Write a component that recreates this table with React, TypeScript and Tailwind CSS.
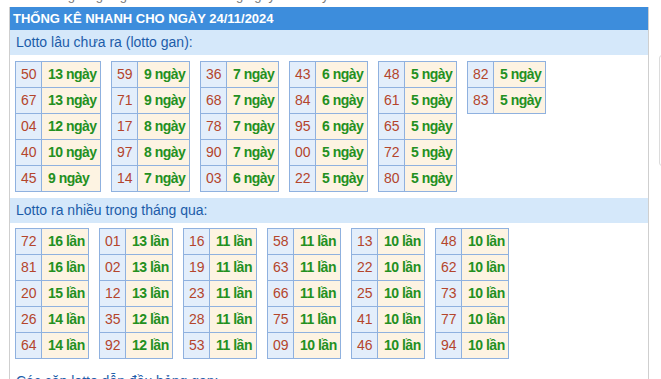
const ganCols: [string, string][][] = [
  [["50", "13"], ["67", "13"], ["04", "12"], ["40", "10"], ["45", "9"]],
  [["59", "9"], ["71", "9"], ["17", "8"], ["97", "8"], ["14", "7"]],
  [["36", "7"], ["68", "7"], ["78", "7"], ["90", "7"], ["03", "6"]],
  [["43", "6"], ["84", "6"], ["95", "6"], ["00", "5"], ["22", "5"]],
  [["48", "5"], ["61", "5"], ["65", "5"], ["72", "5"], ["80", "5"]],
  [["82", "5"], ["83", "5"]],
];

const nhieuCols: [string, string][][] = [
  [["72", "16"], ["81", "16"], ["20", "15"], ["26", "14"], ["64", "14"]],
  [["01", "13"], ["02", "13"], ["12", "13"], ["35", "12"], ["92", "12"]],
  [["16", "11"], ["19", "11"], ["23", "11"], ["28", "11"], ["53", "11"]],
  [["58", "11"], ["63", "11"], ["66", "11"], ["75", "11"], ["09", "10"]],
  [["13", "10"], ["22", "10"], ["25", "10"], ["41", "10"], ["46", "10"]],
  [["48", "10"], ["62", "10"], ["73", "10"], ["77", "10"], ["94", "10"]],
];

function LottoTable({ rows, unit, wide }: { rows: [string, string][]; unit: string; wide: string }) {
  return (
    <table className={`table-fixed border-collapse border border-[#8fb1df] ${wide}`}>
      <tbody>
        {rows.map(([num, count]) => (
          <tr key={num} className="h-[26px]">
            <td className="w-[26px] border border-[#8fb1df] bg-[#e3eefb] pl-[5px] text-[14px] text-[#b4452c]">{num}</td>
            <td className="border border-[#8fb1df] bg-[#fdf3e2] pl-[6px] text-[14px] font-bold tracking-[-0.5px] whitespace-nowrap text-[#23901f]">
              {count} {unit}
            </td>
          </tr>
        ))}
      </tbody>
    </table>
  );
}

function SectionTitle({ children }: { children: string }) {
  return (
    <div className="flex h-[25px] items-center bg-[#d5e8fa] pl-[6px] text-[14px] text-[#1c5ca9]">{children}</div>
  );
}

export default function App() {
  return (
    <div className="h-[379px] w-[661px] overflow-hidden bg-white font-['Liberation_Sans',Arial,sans-serif]">
      <div className="h-[7px] overflow-hidden pl-[12px]">
        <div className="-mt-[12px] text-[13px] leading-[15px] text-[#777]">
          Xem thống kê giải gan nhanh nhất trong ngày hôm nay
        </div>
      </div>
      <div className="flex items-start">
        <div className="ml-[9px] w-[640px] shrink-0 border-x border-[#cfcfcf]">
          <div className="flex h-[23px] items-center bg-[#3d8ddc] pl-[3px] text-[13px] font-bold text-white">
            THỐNG KÊ NHANH CHO NGÀY 24/11/2024
          </div>
          <SectionTitle>Lotto lâu chưa ra (lotto gan):</SectionTitle>
          <div className="flex items-start gap-[10px] px-[5px] pb-[6px] pt-[6px]">
            {ganCols.map((col, i) => (
              <LottoTable key={i} rows={col} unit="ngày" wide={i === 0 ? "w-[86px]" : "w-[79px]"} />
            ))}
          </div>
          <SectionTitle>Lotto ra nhiều trong tháng qua:</SectionTitle>
          <div className="flex items-start gap-[10px] px-[5px] pt-[5px]">
            {nhieuCols.map((col, i) => (
              <LottoTable key={i} rows={col} unit="lần" wide="w-[74px]" />
            ))}
          </div>
          <div className="pl-[6px] pt-[12px] text-[14px] text-[#1c5ca9]">Các cặp lotto dẫn đầu bảng gan:</div>
        </div>
        <div className="ml-[10px] mt-[48px] h-[111px] w-[20px] shrink-0 rounded-[3px] border border-[#dcdcdc]" />
      </div>
    </div>
  );
}
